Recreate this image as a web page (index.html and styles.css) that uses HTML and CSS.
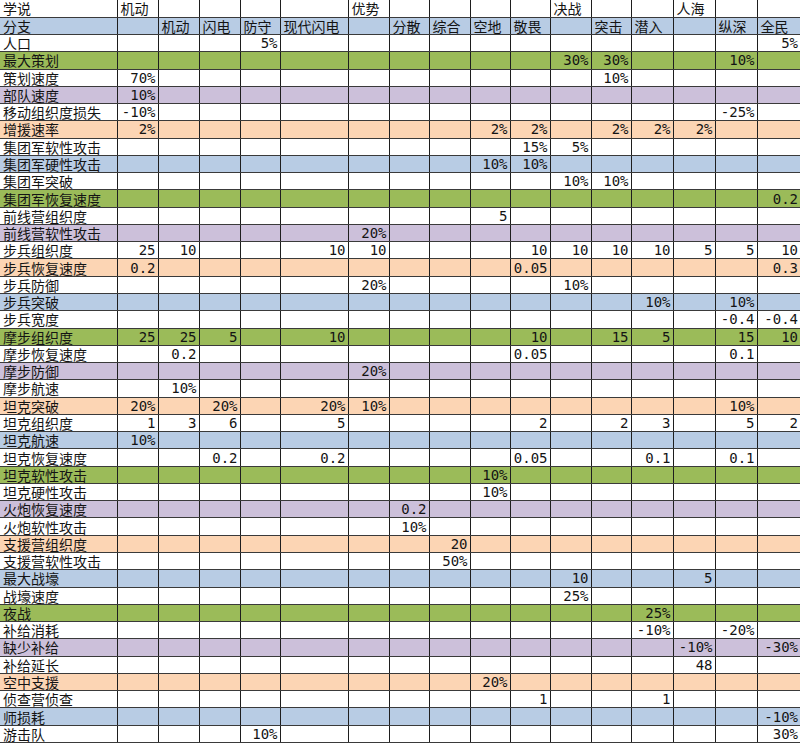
FILE: index.html
```html
<!DOCTYPE html>
<html lang="zh-CN">
<head>
<meta charset="utf-8">
<title>学说分支</title>
<link rel="stylesheet" href="styles.css">
</head>
<body>
<table class="sheet">
<colgroup>
<col class="c-label"><col class="c41"><col class="c41"><col class="c41"><col class="c40"><col class="c68"><col class="c41"><col class="c40"><col class="c41"><col class="c40"><col class="c40"><col class="c41"><col class="c40"><col class="c42"><col class="c42"><col class="c42"><col class="c43">
</colgroup>
<tbody>
<tr class="hd"><td>学说</td><td>机动</td><td></td><td></td><td></td><td></td><td>优势</td><td></td><td></td><td></td><td></td><td>决战</td><td></td><td></td><td>人海</td><td></td><td></td></tr>
<tr class="hd b"><td>分支</td><td></td><td>机动</td><td>闪电</td><td>防守</td><td>现代闪电</td><td></td><td>分散</td><td>综合</td><td>空地</td><td>敬畏</td><td></td><td>突击</td><td>潜入</td><td></td><td>纵深</td><td>全民</td></tr>
<tr><td>人口</td><td></td><td></td><td></td><td>5%</td><td></td><td></td><td></td><td></td><td></td><td></td><td></td><td></td><td></td><td></td><td></td><td>5%</td></tr>
<tr class="g"><td>最大策划</td><td></td><td></td><td></td><td></td><td></td><td></td><td></td><td></td><td></td><td></td><td>30%</td><td>30%</td><td></td><td></td><td>10%</td><td></td></tr>
<tr><td>策划速度</td><td>70%</td><td></td><td></td><td></td><td></td><td></td><td></td><td></td><td></td><td></td><td></td><td>10%</td><td></td><td></td><td></td><td></td></tr>
<tr class="p"><td>部队速度</td><td>10%</td><td></td><td></td><td></td><td></td><td></td><td></td><td></td><td></td><td></td><td></td><td></td><td></td><td></td><td></td><td></td></tr>
<tr><td>移动组织度损失</td><td>-10%</td><td></td><td></td><td></td><td></td><td></td><td></td><td></td><td></td><td></td><td></td><td></td><td></td><td></td><td>-25%</td><td></td></tr>
<tr class="o"><td>增援速率</td><td>2%</td><td></td><td></td><td></td><td></td><td></td><td></td><td></td><td>2%</td><td>2%</td><td></td><td>2%</td><td>2%</td><td>2%</td><td></td><td></td></tr>
<tr><td>集团军软性攻击</td><td></td><td></td><td></td><td></td><td></td><td></td><td></td><td></td><td></td><td>15%</td><td>5%</td><td></td><td></td><td></td><td></td><td></td></tr>
<tr class="b"><td>集团军硬性攻击</td><td></td><td></td><td></td><td></td><td></td><td></td><td></td><td></td><td>10%</td><td>10%</td><td></td><td></td><td></td><td></td><td></td><td></td></tr>
<tr><td>集团军突破</td><td></td><td></td><td></td><td></td><td></td><td></td><td></td><td></td><td></td><td></td><td>10%</td><td>10%</td><td></td><td></td><td></td><td></td></tr>
<tr class="g"><td>集团军恢复速度</td><td></td><td></td><td></td><td></td><td></td><td></td><td></td><td></td><td></td><td></td><td></td><td></td><td></td><td></td><td></td><td>0.2</td></tr>
<tr><td>前线营组织度</td><td></td><td></td><td></td><td></td><td></td><td></td><td></td><td></td><td>5</td><td></td><td></td><td></td><td></td><td></td><td></td><td></td></tr>
<tr class="p"><td>前线营软性攻击</td><td></td><td></td><td></td><td></td><td></td><td>20%</td><td></td><td></td><td></td><td></td><td></td><td></td><td></td><td></td><td></td><td></td></tr>
<tr><td>步兵组织度</td><td>25</td><td>10</td><td></td><td></td><td>10</td><td>10</td><td></td><td></td><td></td><td>10</td><td>10</td><td>10</td><td>10</td><td>5</td><td>5</td><td>10</td></tr>
<tr class="o"><td>步兵恢复速度</td><td>0.2</td><td></td><td></td><td></td><td></td><td></td><td></td><td></td><td></td><td>0.05</td><td></td><td></td><td></td><td></td><td></td><td>0.3</td></tr>
<tr><td>步兵防御</td><td></td><td></td><td></td><td></td><td></td><td>20%</td><td></td><td></td><td></td><td></td><td>10%</td><td></td><td></td><td></td><td></td><td></td></tr>
<tr class="b"><td>步兵突破</td><td></td><td></td><td></td><td></td><td></td><td></td><td></td><td></td><td></td><td></td><td></td><td></td><td>10%</td><td></td><td>10%</td><td></td></tr>
<tr><td>步兵宽度</td><td></td><td></td><td></td><td></td><td></td><td></td><td></td><td></td><td></td><td></td><td></td><td></td><td></td><td></td><td>-0.4</td><td>-0.4</td></tr>
<tr class="g"><td>摩步组织度</td><td>25</td><td>25</td><td>5</td><td></td><td>10</td><td></td><td></td><td></td><td></td><td>10</td><td></td><td>15</td><td>5</td><td></td><td>15</td><td>10</td></tr>
<tr><td>摩步恢复速度</td><td></td><td>0.2</td><td></td><td></td><td></td><td></td><td></td><td></td><td></td><td>0.05</td><td></td><td></td><td></td><td></td><td>0.1</td><td></td></tr>
<tr class="p"><td>摩步防御</td><td></td><td></td><td></td><td></td><td></td><td>20%</td><td></td><td></td><td></td><td></td><td></td><td></td><td></td><td></td><td></td><td></td></tr>
<tr><td>摩步航速</td><td></td><td>10%</td><td></td><td></td><td></td><td></td><td></td><td></td><td></td><td></td><td></td><td></td><td></td><td></td><td></td><td></td></tr>
<tr class="o"><td>坦克突破</td><td>20%</td><td></td><td>20%</td><td></td><td>20%</td><td>10%</td><td></td><td></td><td></td><td></td><td></td><td></td><td></td><td></td><td>10%</td><td></td></tr>
<tr><td>坦克组织度</td><td>1</td><td>3</td><td>6</td><td></td><td>5</td><td></td><td></td><td></td><td></td><td>2</td><td></td><td>2</td><td>3</td><td></td><td>5</td><td>2</td></tr>
<tr class="b"><td>坦克航速</td><td>10%</td><td></td><td></td><td></td><td></td><td></td><td></td><td></td><td></td><td></td><td></td><td></td><td></td><td></td><td></td><td></td></tr>
<tr><td>坦克恢复速度</td><td></td><td></td><td>0.2</td><td></td><td>0.2</td><td></td><td></td><td></td><td></td><td>0.05</td><td></td><td></td><td>0.1</td><td></td><td>0.1</td><td></td></tr>
<tr class="g"><td>坦克软性攻击</td><td></td><td></td><td></td><td></td><td></td><td></td><td></td><td></td><td>10%</td><td></td><td></td><td></td><td></td><td></td><td></td><td></td></tr>
<tr><td>坦克硬性攻击</td><td></td><td></td><td></td><td></td><td></td><td></td><td></td><td></td><td>10%</td><td></td><td></td><td></td><td></td><td></td><td></td><td></td></tr>
<tr class="p"><td>火炮恢复速度</td><td></td><td></td><td></td><td></td><td></td><td></td><td>0.2</td><td></td><td></td><td></td><td></td><td></td><td></td><td></td><td></td><td></td></tr>
<tr><td>火炮软性攻击</td><td></td><td></td><td></td><td></td><td></td><td></td><td>10%</td><td></td><td></td><td></td><td></td><td></td><td></td><td></td><td></td><td></td></tr>
<tr class="o"><td>支援营组织度</td><td></td><td></td><td></td><td></td><td></td><td></td><td></td><td>20</td><td></td><td></td><td></td><td></td><td></td><td></td><td></td><td></td></tr>
<tr><td>支援营软性攻击</td><td></td><td></td><td></td><td></td><td></td><td></td><td></td><td>50%</td><td></td><td></td><td></td><td></td><td></td><td></td><td></td><td></td></tr>
<tr class="b"><td>最大战壕</td><td></td><td></td><td></td><td></td><td></td><td></td><td></td><td></td><td></td><td></td><td>10</td><td></td><td></td><td>5</td><td></td><td></td></tr>
<tr><td>战壕速度</td><td></td><td></td><td></td><td></td><td></td><td></td><td></td><td></td><td></td><td></td><td>25%</td><td></td><td></td><td></td><td></td><td></td></tr>
<tr class="g"><td>夜战</td><td></td><td></td><td></td><td></td><td></td><td></td><td></td><td></td><td></td><td></td><td></td><td></td><td>25%</td><td></td><td></td><td></td></tr>
<tr><td>补给消耗</td><td></td><td></td><td></td><td></td><td></td><td></td><td></td><td></td><td></td><td></td><td></td><td></td><td>-10%</td><td></td><td>-20%</td><td></td></tr>
<tr class="p"><td>缺少补给</td><td></td><td></td><td></td><td></td><td></td><td></td><td></td><td></td><td></td><td></td><td></td><td></td><td></td><td>-10%</td><td></td><td>-30%</td></tr>
<tr><td>补给延长</td><td></td><td></td><td></td><td></td><td></td><td></td><td></td><td></td><td></td><td></td><td></td><td></td><td></td><td>48</td><td></td><td></td></tr>
<tr class="o"><td>空中支援</td><td></td><td></td><td></td><td></td><td></td><td></td><td></td><td></td><td>20%</td><td></td><td></td><td></td><td></td><td></td><td></td><td></td></tr>
<tr><td>侦查营侦查</td><td></td><td></td><td></td><td></td><td></td><td></td><td></td><td></td><td></td><td>1</td><td></td><td></td><td>1</td><td></td><td></td><td></td></tr>
<tr class="b"><td>师损耗</td><td></td><td></td><td></td><td></td><td></td><td></td><td></td><td></td><td></td><td></td><td></td><td></td><td></td><td></td><td></td><td>-10%</td></tr>
<tr><td>游击队</td><td></td><td></td><td></td><td>10%</td><td></td><td></td><td></td><td></td><td></td><td></td><td></td><td></td><td></td><td></td><td></td><td>30%</td></tr>
</tbody>
</table>
</body>
</html>
```

FILE: styles.css
```css
html, body {
  margin: 0;
  padding: 0;
  background: #ffffff;
}

.sheet {
  border-collapse: collapse;
  table-layout: fixed;
  width: 800px;
}

.c-label { width: 117px; }
.c40 { width: 40px; }
.c41 { width: 41px; }
.c42 { width: 42px; }
.c43 { width: 43px; }
.c68 { width: 68px; }

.sheet tr {
  height: 17.28px;
}

.sheet td {
  padding: 0 2px 0 3px;
  border-right: 1px solid #1e1e1e;
  border-bottom: 1px solid #3a3a3a;
  font-family: "DejaVu Sans Mono", "Liberation Mono", monospace;
  font-size: 14px;
  line-height: 16px;
  color: #141414;
  text-align: right;
  white-space: nowrap;
  overflow: visible;
  vertical-align: middle;
}

.sheet td:first-child,
.sheet .hd td {
  text-align: left;
  font-family: "Noto Sans CJK SC", "Noto Sans CJK JP", sans-serif;
  font-size: 14px;
}

.sheet td:last-child {
  border-right: none;
}

.b { background: #b8cce4; }
.g { background: #9bbb59; }
.p { background: #ccc0da; }
.o { background: #fcd5b4; }
```
